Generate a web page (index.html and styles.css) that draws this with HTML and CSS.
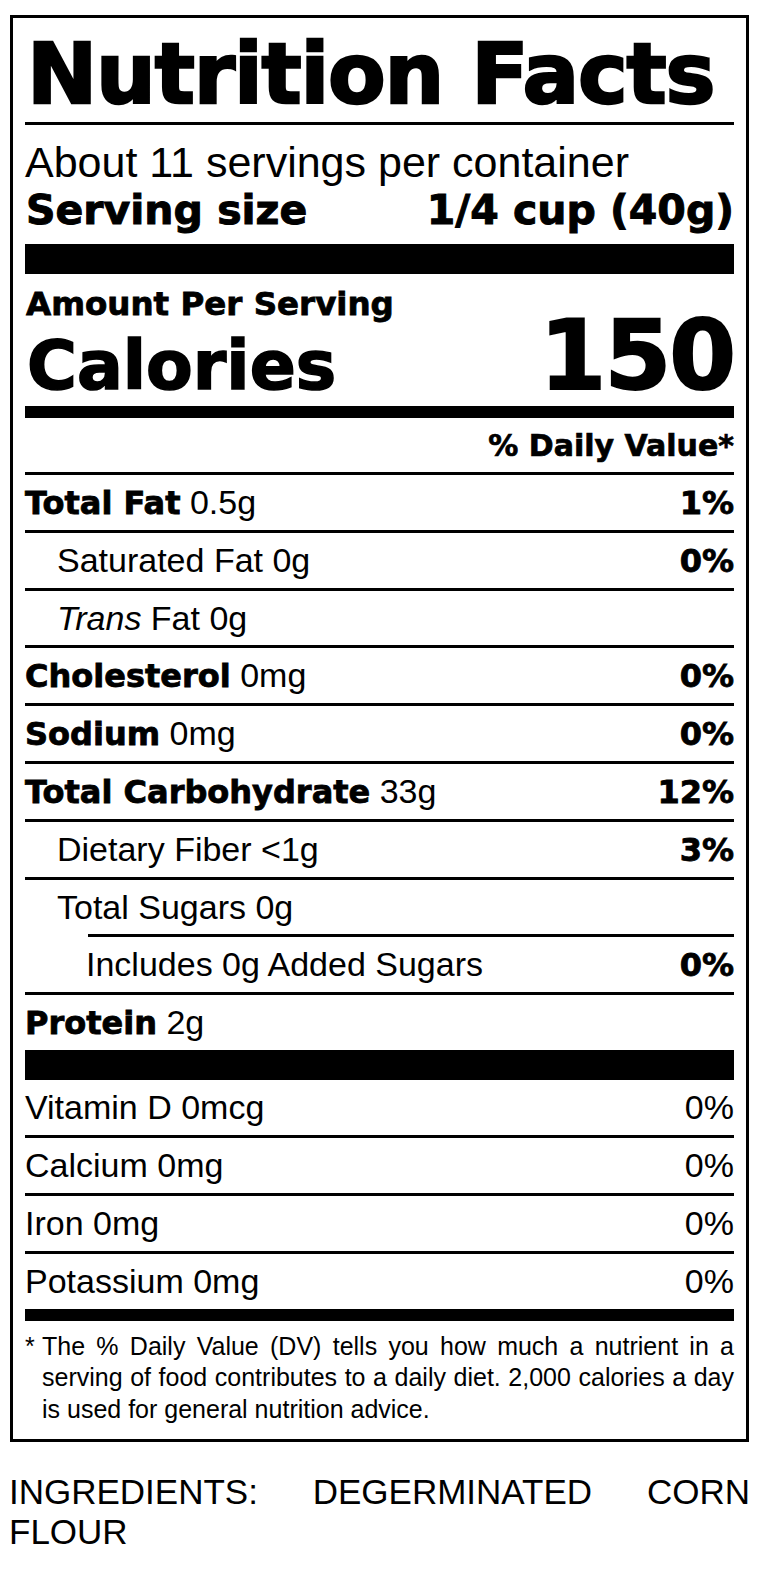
FILE: index.html
```html
<!DOCTYPE html>
<html lang="en">
<head>
<meta charset="utf-8">
<title>Nutrition Facts</title>
<link rel="stylesheet" href="styles.css">
</head>
<body>
<section class="label">
  <h1 class="title">Nutrition Facts</h1>
  <div class="rule"></div>
  <p class="servings">About 11 servings per container</p>
  <div class="serving-size"><span>Serving size</span><span>1/4 cup (40g)</span></div>
  <div class="bar bar-lg"></div>
  <div class="amount">Amount Per Serving</div>
  <div class="calories"><span class="cal-label">Calories</span><span class="cal-value">150</span></div>
  <div class="bar bar-md"></div>
  <div class="dv-head">% Daily Value*</div>
  <div class="nutrients">
    <div class="row"><span><b>Total Fat</b> 0.5g</span><b>1%</b></div>
    <div class="row"><span class="ind">Saturated Fat 0g</span><b>0%</b></div>
    <div class="row"><span class="ind"><i>Trans</i> Fat 0g</span></div>
    <div class="row"><span><b>Cholesterol</b> 0mg</span><b>0%</b></div>
    <div class="row"><span><b>Sodium</b> 0mg</span><b>0%</b></div>
    <div class="row"><span><b>Total Carbohydrate</b> 33g</span><b>12%</b></div>
    <div class="row"><span class="ind">Dietary Fiber &lt;1g</span><b>3%</b></div>
    <div class="row open"><span class="ind">Total Sugars 0g</span></div>
    <div class="rule-indent"></div>
    <div class="row"><span class="ind2">Includes 0g Added Sugars</span><b>0%</b></div>
    <div class="row last"><span><b>Protein</b> 2g</span></div>
  </div>
  <div class="bar bar-lg2"></div>
  <div class="vitamins">
    <div class="row"><span>Vitamin D 0mcg</span><span>0%</span></div>
    <div class="row"><span>Calcium 0mg</span><span>0%</span></div>
    <div class="row"><span>Iron 0mg</span><span>0%</span></div>
    <div class="row last"><span>Potassium 0mg</span><span>0%</span></div>
  </div>
  <div class="bar bar-md"></div>
  <div class="foot">
    <span class="star">*</span>
    <p>The % Daily Value (DV) tells you how much a nutrient in a serving of food contributes to a daily diet. 2,000 calories a day is used for general nutrition advice.</p>
  </div>
</section>
<p class="ingredients">INGREDIENTS: DEGERMINATED CORN FLOUR</p>
</body>
</html>
```
FILE: styles.css
```css
* {
  box-sizing: border-box;
  margin: 0;
  padding: 0;
}

body {
  margin: 0;
  background: #fff;
  color: #000;
  font-family: "Liberation Sans", Arial, sans-serif;
}

.label {
  width: 739px;
  margin: 15px 0 0 10px;
  border: 3px solid #000;
  padding: 0 12px 14px;
}

.title {
  margin-top: 14px;
  font-family: "DejaVu Sans", sans-serif;
  font-weight: 700;
  font-size: 84px;
  line-height: 84px;
  letter-spacing: -1.2px;
  white-space: nowrap;
  -webkit-text-stroke: 2.4px #000;
  padding-left: 2px;
}

.rule {
  height: 3px;
  margin-top: 6px;
  background: #000;
}

.servings {
  margin-top: 15px;
  font-size: 43px;
  line-height: 44px;
}

.serving-size {
  margin-top: 4px;
  display: flex;
  justify-content: space-between;
  font-family: "DejaVu Sans", sans-serif;
  font-weight: 700;
  font-size: 41px;
  line-height: 44px;
  -webkit-text-stroke: 1px #000;
  padding-left: 1px;
}

.bar {
  background: #000;
}

.bar-lg {
  height: 30px;
  margin-top: 12px;
}

.bar-lg2 {
  height: 30px;
}

.bar-md {
  height: 12px;
}

.amount {
  margin-top: 13px;
  font-family: "DejaVu Sans", sans-serif;
  font-weight: 700;
  font-size: 32.5px;
  line-height: 34px;
  -webkit-text-stroke: 0.8px #000;
  padding-left: 1px;
}

.calories {
  height: 85px;
  display: flex;
  justify-content: space-between;
  align-items: baseline;
  font-family: "DejaVu Sans", sans-serif;
  font-weight: 700;
  padding-left: 2px;
}

.cal-label {
  font-size: 68px;
  line-height: 60px;
  -webkit-text-stroke: 1.6px #000;
}

.cal-value {
  font-size: 96px;
  line-height: 70px;
  margin-right: 0;
  letter-spacing: -2px;
  -webkit-text-stroke: 2px #000;
}

.dv-head {
  height: 57px;
  padding: 10px 0 8px;
  text-align: right;
  font-family: "DejaVu Sans", sans-serif;
  font-weight: 700;
  font-size: 30px;
  line-height: 36px;
  border-bottom: 3px solid #000;
  -webkit-text-stroke: 0.7px #000;
}

.row {
  display: flex;
  justify-content: space-between;
  align-items: baseline;
  height: 57.8px;
  line-height: 54.8px;
  font-size: 34px;
  border-bottom: 3px solid #000;
  white-space: nowrap;
}

.row b {
  font-family: "DejaVu Sans", sans-serif;
  font-weight: 700;
  font-size: 32px;
  -webkit-text-stroke: 0.8px #000;
}

.row.open,
.row.last {
  height: 54.8px;
  border-bottom: 0;
}

.vitamins .row {
  height: 58px;
  line-height: 55px;
}

.vitamins .row.last {
  height: 55px;
}

.ind {
  padding-left: 32px;
}

.ind2 {
  padding-left: 61px;
}

.rule-indent {
  height: 3px;
  margin-left: 63px;
  background: #000;
}

.foot {
  display: flex;
  margin-top: 10px;
  font-size: 25px;
  line-height: 31.5px;
}

.star {
  flex: none;
  width: 17px;
}

.foot p {
  flex: 1;
  text-align: justify;
}

.ingredients {
  width: 741px;
  margin: 30px 0 0 9px;
  font-size: 35px;
  line-height: 39.5px;
  text-align: justify;
}
```
